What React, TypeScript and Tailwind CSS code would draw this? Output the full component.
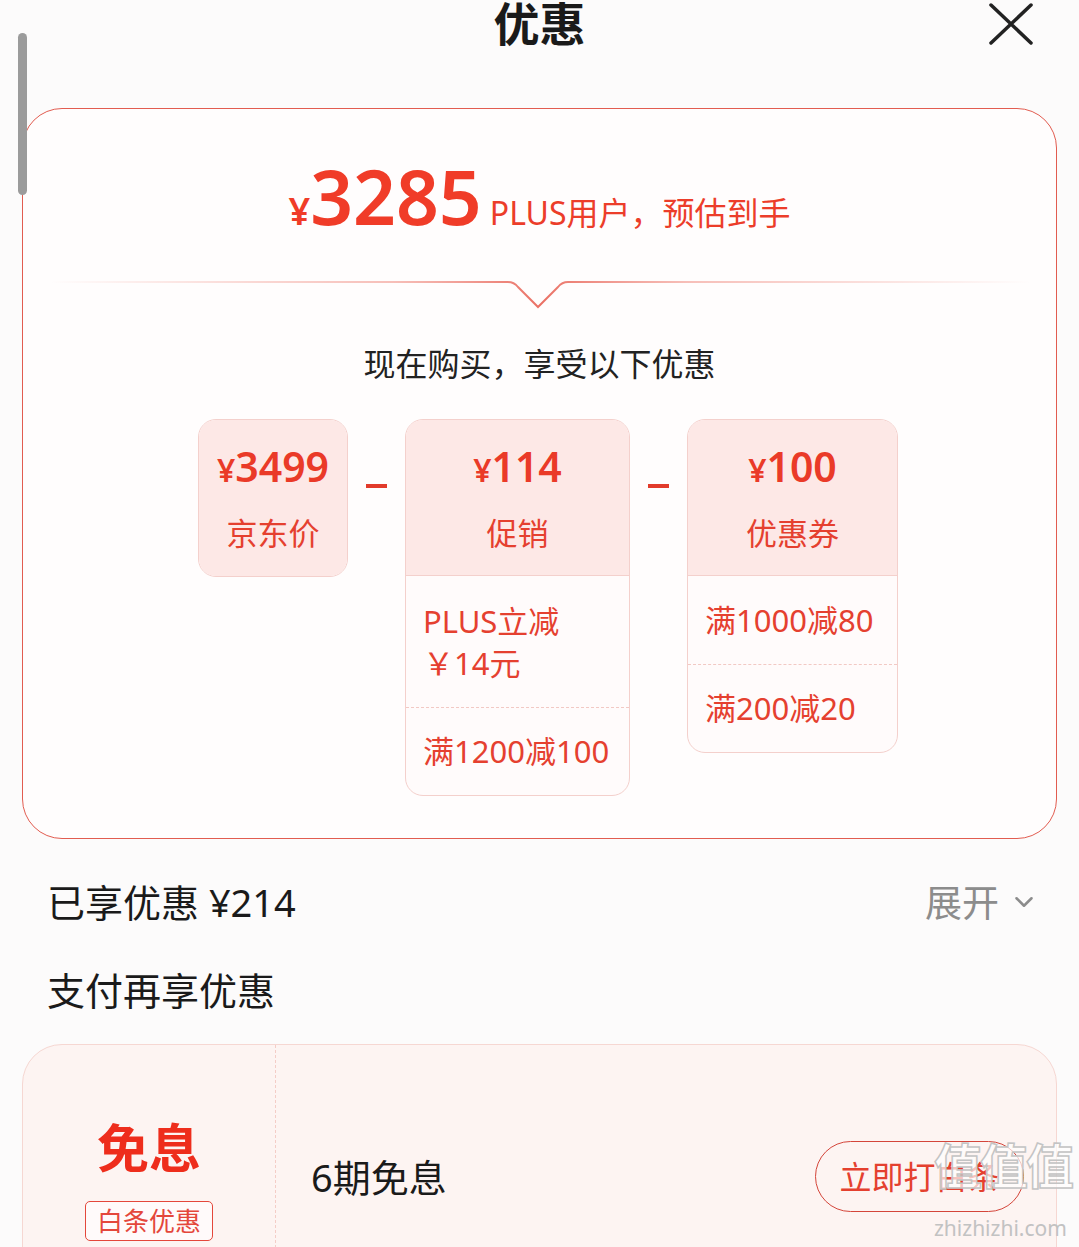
import React from 'react';
import { ChevronDown } from 'lucide-react';

const RED = 'text-[#e5402f]';

const Divider: React.FC = () => (
    <svg width="980" height="30" viewBox="0 0 980 30" className="mt-[46px] block">
        <defs>
            <linearGradient id="dv" x1="0" x2="1" y1="0" y2="0">
                <stop offset="0" stopColor="#f3a49b" stopOpacity="0" />
                <stop offset="0.35" stopColor="#f3a49b" stopOpacity="0.7" />
                <stop offset="0.5" stopColor="#ea7064" stopOpacity="1" />
                <stop offset="0.65" stopColor="#f3a49b" stopOpacity="0.7" />
                <stop offset="1" stopColor="#f3a49b" stopOpacity="0" />
            </linearGradient>
        </defs>
        <path
            d="M0 2 H458 Q464 2 468 7 L488 27 L508 7 Q512 2 518 2 H980"
            fill="none"
            stroke="url(#dv)"
            strokeWidth="2"
        />
    </svg>
);

const Minus: React.FC = () => <div className="mx-[18px] mt-[65px] h-[4px] w-[21px] bg-[#e23b2b]" />;

const Head: React.FC<{ amount: string; label: string; solo?: boolean }> = ({ amount, label, solo }) => (
    <div
        className={`flex h-[156px] flex-col items-center bg-[#fde8e6] pt-[26px] ${solo ? '' : 'border-b border-[#f4d0cc]'}`}
    >
        <div className="flex items-baseline font-semibold leading-none text-[#ea3a28]">
            <span className="text-[32px]">¥</span>
            <span className="text-[41px]">{amount}</span>
        </div>
        <div className={`mt-[31px] text-[31px] leading-none ${RED}`}>{label}</div>
    </div>
);

const App: React.FC = () => {
    return (
        <div
            className="relative h-[1247px] w-[1079px] overflow-hidden bg-[#fcfbfb] text-[#1a1a1a]"
            style={{ fontFamily: '"Noto Sans", "Noto Sans CJK SC", sans-serif' }}
        >
            {/* 滚动条 */}
            <div className="absolute left-[18px] top-[33px] h-[162px] w-[9px] rounded-full bg-[#9b9b9b]" />

            {/* 标题 */}
            <div className="relative h-[108px]">
                <h1 className="text-center text-[46px] font-bold leading-none">优惠</h1>
                <button className="absolute left-[988px] top-[2px]">
                    <svg width="46" height="44" viewBox="0 0 46 44">
                        <path d="M3 3 L43 41 M43 3 L3 41" stroke="#222" strokeWidth="3.5" strokeLinecap="round" />
                    </svg>
                </button>
            </div>

            {/* 价格卡片 */}
            <div className="mx-[22px] h-[731px] rounded-[40px] border border-[#e25c50] bg-[#fffdfd]">
                <div className="flex flex-col items-center">
                    <div className="mt-[50px] flex items-baseline leading-none text-[#f03c28]">
                        <span className="text-[38px] font-semibold">¥</span>
                        <span className="text-[75px] font-semibold">3285</span>
                        <span className="ml-[8px] text-[32px] text-[#ec3d2a]">PLUS用户，预估到手</span>
                    </div>
                    <Divider />
                    <div className="mt-[38px] text-[32px] leading-none text-[#222]">现在购买，享受以下优惠</div>
                </div>

                <div className="mt-[39px] flex items-start pl-[175px]">
                    <div className="w-[150px] overflow-hidden rounded-[18px] border border-[#f4d0cc]">
                        <Head amount="3499" label="京东价" solo />
                    </div>
                    <Minus />
                    <div className="w-[225px] overflow-hidden rounded-[18px] border border-[#f4d0cc] bg-[#fffbfb]">
                        <Head amount="114" label="促销" />
                        <div className={`px-[17px] pt-[24px] pb-[23px] text-[31px] leading-[42px] ${RED}`}>
                            PLUS立减
                            <br />
                            ￥14元
                        </div>
                        <div className={`flex h-[88px] items-center border-t border-dashed border-[#f2c9c4] px-[17px] text-[31px] leading-none ${RED}`}>
                            满1200减100
                        </div>
                    </div>
                    <Minus />
                    <div className="w-[211px] overflow-hidden rounded-[18px] border border-[#f4d0cc] bg-[#fffbfb]">
                        <Head amount="100" label="优惠券" />
                        <div className={`flex h-[88px] items-center px-[17px] text-[31px] leading-none ${RED}`}>满1000减80</div>
                        <div className={`flex h-[88px] items-center border-t border-dashed border-[#f2c9c4] px-[17px] text-[31px] leading-none ${RED}`}>
                            满200减20
                        </div>
                    </div>
                </div>
            </div>

            {/* 已享优惠 */}
            <div className="mt-[44px] flex items-center justify-between pl-[47px] pr-[40px]">
                <div className="text-[38px] leading-none">已享优惠 ¥214</div>
                <div className="flex items-center gap-[10px] text-[37px] leading-none text-[#8c8c8c]">
                    展开
                    <ChevronDown size={30} strokeWidth={2} className="text-[#8c8c8c]" />
                </div>
            </div>
            <div className="mt-[50px] pl-[47px] text-[38px] leading-none">支付再享优惠</div>

            {/* 白条 */}
            <div className="mx-[22px] mt-[35px] flex h-[270px] rounded-[40px] border border-[#f6d7d2] bg-[#fdf4f2]">
                <div className="flex w-[253px] flex-col items-center border-r border-dashed border-[#f4cdc7] pt-[77px]">
                    <div className="text-[52px] font-bold leading-none text-[#ee2d1c]">免息</div>
                    <div className="mt-[27px] flex h-[40px] items-center rounded-[5px] border border-[#e4473b] bg-[#fffafa] px-[11px] text-[26px] leading-none text-[#e4473b]">
                        白条优惠
                    </div>
                </div>
                <div className="flex flex-1 items-start pt-[96px] pl-[35px] pr-[32px]">
                    <div className="flex h-[71px] flex-1 items-center justify-between">
                        <div className="text-[38px] leading-none">6期免息</div>
                        <button className="flex h-[71px] w-[209px] items-center justify-center rounded-full border border-[#d4453a] text-[32px] leading-none text-[#e4402f]">
                            立即打白条
                        </button>
                    </div>
                </div>
            </div>

            {/* 水印 */}
            <div className="pointer-events-none absolute left-[934px] top-[1142px] flex flex-col items-start whitespace-nowrap">
                <div className="text-[48px] font-bold leading-none tracking-[-2px] text-white/70 [-webkit-text-stroke:1.5px_#c4c4c4]">值值值</div>
                <div className="mt-[28px] text-[21px] leading-none text-[#c2c2c2]">zhizhizhi.com</div>
            </div>
        </div>
    );
};

export default App;
